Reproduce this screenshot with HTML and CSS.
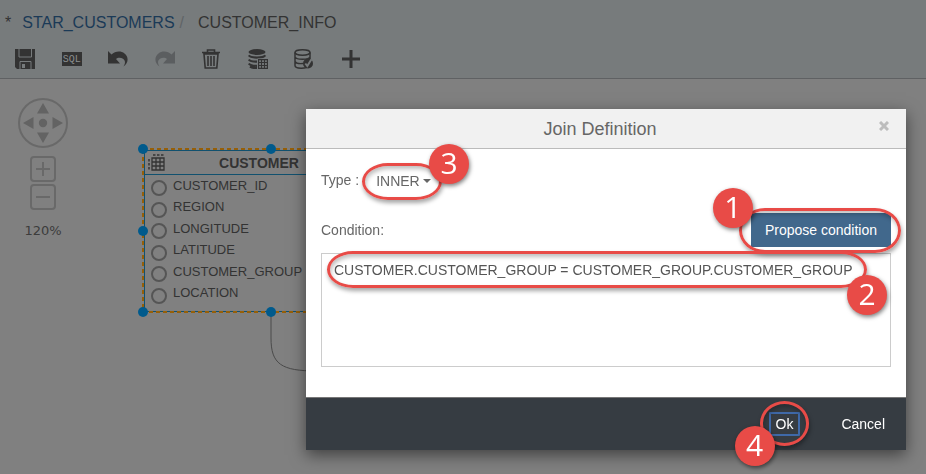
FILE: index.html
```html
<!DOCTYPE html>
<html lang="en">
<head>
<meta charset="utf-8">
<title>Join Definition</title>
<link rel="stylesheet" href="styles.css">
</head>
<body>
<header class="topbar">
  <nav class="crumbs" aria-label="Breadcrumb">
    <span class="dirty">*</span>
    <a href="#">STAR_CUSTOMERS</a>
    <span class="sep">/</span>
    <span>CUSTOMER_INFO</span>
  </nav>
  <div class="toolbar">
    <button type="button" aria-label="Save"><svg viewBox="0 0 20 20"><path fill="currentColor" d="M0 0h20v20H2l-2-2z"/><path class="cutline" d="M4 0v8h12.500V0M5 20v-7.500h11V20"/><path class="cut" d="M7 15h3v4H7z"/></svg></button>
    <button type="button" aria-label="Show SQL"><span class="sql">SQL</span></button>
    <button type="button" aria-label="Undo"><svg viewBox="0 0 20 20"><path fill="currentColor" d="M0 2l3.500 3.500C7 2 13 1.500 16.500 4.500c4.500 3.500 4 9.500-1 13 2.500-4 1.500-6.500-.5-7.800-2.500-1.700-5.500-1.200-7 .3l4 4.500H0z"/></svg></button>
    <button type="button" aria-label="Redo" class="off"><svg viewBox="0 0 20 20"><path fill="currentColor" d="M20 2l-3.500 3.500C13 2 7 1.500 3.500 4.500c-4.500 3.500-4 9.500 1 13-2.500-4-1.500-6.500.5-7.800 2.500-1.700 5.500-1.200 7 .3l-4 4.500H20z"/></svg></button>
    <button type="button" aria-label="Delete"><svg viewBox="0 0 20 20"><path fill="none" stroke="currentColor" stroke-width="1.600" d="M1 3.500h18M6.500 3V1h7v2M3 5l1.200 14h11.600L17 5zM7 7v10M10 7v10M13 7v10"/></svg></button>
    <button type="button" aria-label="Table data"><svg viewBox="0 0 20 20"><ellipse cx="9" cy="3" rx="8.500" ry="3" fill="currentColor"/><path fill="none" stroke="currentColor" stroke-width="2.200" d="M.8 6.300c1.500 3 14.900 3 16.400 0M.8 10.500c1 1.500 4 2.200 8.200 2.200M.8 14.500c1 1.500 4 2.400 8.200 2.400M2 17.500c2 1.300 4 1.700 7 1.700"/><path class="cut" d="M9.500 9.500H20V20H9.500z"/><path fill="none" stroke="currentColor" stroke-width="1.200" d="M10.600 10.600h8.800v8.800h-8.800zM13.500 10.600v8.800M16.500 10.600v8.800M10.600 13.500h8.800M10.600 16.500h8.800"/></svg></button>
    <button type="button" aria-label="Validate"><svg viewBox="0 0 20 20"><g fill="none" stroke="currentColor" stroke-width="1.500"><ellipse cx="8.500" cy="3.500" rx="7.500" ry="2.700"/><path d="M1 3.500v13c0 3.500 11 3.500 15 .5V3.500M1 8c1.500 3 13.500 3 15 0M1 12.300c1 2 5 2.500 8 2.200"/></g><circle cx="14" cy="14.500" r="5" fill="currentColor"/><path class="tick" d="M11.300 14.500l2 2.500 4-6.500"/></svg></button>
    <button type="button" aria-label="Add"><svg viewBox="0 0 20 20"><path stroke="currentColor" stroke-width="3" d="M10 1v18M1 10h18"/></svg></button>
  </div>
</header>

<main class="canvas">
  <div class="view-controls">
    <button type="button" aria-label="Pan"><svg class="pan" viewBox="0 0 50 50"><circle cx="25" cy="25" r="24" fill="none" stroke="currentColor" stroke-width="2"/><circle class="arrow" cx="25" cy="25" r="4.200"/><path class="arrow" d="M25 5l6 10.500H19zM25 45l6-10.500H19zM5 25l10.500-6v12zM45 25l-10.500-6v12z"/></svg></button>
    <button type="button" aria-label="Zoom in"><svg class="zoom" viewBox="0 0 26 26"><rect x="1" y="1" width="24" height="24" rx="3"/><path d="M6 13h14M13 6v14"/></svg></button>
    <button type="button" aria-label="Zoom out"><svg class="zoom" viewBox="0 0 26 26"><rect x="1" y="1" width="24" height="24" rx="3"/><path d="M6 13h14"/></svg></button>
    <span class="level">120%</span>
  </div>

  <section class="node">
    <h2><svg viewBox="0 0 18 18"><path fill="none" stroke="currentColor" stroke-width="1.300" d="M4 4h12v12H4zM8 4v12M12 4v12M4 8h12M4 12h12"/><path fill="none" stroke="currentColor" stroke-width="1.500" stroke-dasharray="2.500 1.500" d="M5 1h11M1 5v11"/></svg><span>CUSTOMER</span></h2>
    <ul>
      <li><i></i>CUSTOMER_ID</li>
      <li><i></i>REGION</li>
      <li><i></i>LONGITUDE</li>
      <li><i></i>LATITUDE</li>
      <li><i></i>CUSTOMER_GROUP</li>
      <li><i></i>LOCATION</li>
    </ul>
    <svg class="selection" viewBox="0 0 270 240">
      <path class="link" d="M134 170v25c0 26 10 33 46 33"/>
      <rect class="dash" x="6" y="6" width="256" height="163"/>
      <g class="grip"><circle cx="6" cy="6" r="5"/><circle cx="134" cy="6" r="5"/><circle cx="262" cy="6" r="5"/><circle cx="6" cy="88" r="5"/><circle cx="262" cy="88" r="5"/><circle cx="6" cy="169" r="5"/><circle cx="134" cy="169" r="5"/><circle cx="262" cy="169" r="5"/></g>
    </svg>
  </section>
</main>

<div class="overlay">
  <form class="dialog" role="dialog" aria-labelledby="title">
    <div class="dialog-head">
      <h1 id="title">Join Definition</h1>
      <button type="button" class="close" aria-label="Close"><svg viewBox="0 0 10 10"><path d="M1 1l8 8M9 1L1 9"/></svg></button>
    </div>
    <div class="dialog-body">
      <div class="type-row">
        <label for="type">Type :</label>
        <div class="type-pick">
          <select id="type"><option>INNER</option></select>
          <span class="ring ring-type"></span><span class="badge badge-type">3</span>
        </div>
      </div>
      <div class="cond-row">
        <label for="cond">Condition:</label>
        <div class="mark">
          <button type="button" class="propose">Propose condition</button>
          <span class="ring ring-propose"></span><span class="badge badge-propose">1</span>
        </div>
      </div>
      <div class="mark">
        <textarea id="cond" spellcheck="false">CUSTOMER.CUSTOMER_GROUP = CUSTOMER_GROUP.CUSTOMER_GROUP</textarea>
        <span class="ring ring-cond"></span><span class="badge badge-cond">2</span>
      </div>
    </div>
    <div class="dialog-foot">
      <div class="mark">
        <button type="button" class="ok">Ok</button>
        <span class="ring ring-ok"></span><span class="badge badge-ok">4</span>
      </div>
      <button type="button" class="cancel">Cancel</button>
    </div>
  </form>
</div>
</body>
</html>
```
FILE: styles.css
```css
* { box-sizing: border-box; }

body {
  margin: 0;
  min-height: 100vh;
  display: flex;
  flex-direction: column;
  overflow: hidden;
  background: #808080;
  color: #333;
  font: 14px/20px "Liberation Sans", Arial, sans-serif;
}

button, select, textarea { font: inherit; color: inherit; }

button {
  padding: 0;
  border: 0;
  background: none;
}

svg { display: block; }

/* Top bar */
.topbar {
  background: #777b7c;
  border-bottom: 1px solid #5f6163;
  padding: 13px 2px 8px;
}

.crumbs {
  display: flex;
  padding-left: 3px;
  font-size: 16px;
}

.crumbs a {
  margin-left: 11px;
  color: #1b3a57;
  text-decoration: none;
}

.sep {
  margin: 0 14px 0 5px;
  color: #606467;
}

.toolbar {
  display: grid;
  grid-template-columns: repeat(8, 1fr);
  width: 372px;
  margin-top: 15px;
}

.toolbar button {
  display: grid;
  place-items: center;
  height: 22px;
}

.toolbar svg { width: 20px; height: 20px; }
.toolbar .off { color: #5b5e60; }
.cut { fill: #777b7c; }
.cutline { fill: none; stroke: #777b7c; }
.tick { fill: none; stroke: #777b7c; stroke-width: 2; }

.sql {
  width: 20px;
  height: 14px;
  background: #333;
  color: #8b8f90;
  font: 10px/16px "Liberation Mono", monospace;
  text-align: center;
}

/* Canvas */
.canvas {
  position: relative;
  flex: 1;
}

.view-controls {
  display: flex;
  flex-direction: column;
  align-items: center;
  gap: 2px;
  width: 50px;
  margin: 19px 18px;
  color: #696969;
}

.pan { width: 50px; height: 50px; margin-bottom: 6px; }
.arrow { fill: #636363; }

.zoom {
  width: 26px;
  height: 26px;
  fill: none;
  stroke: currentColor;
  stroke-width: 2;
}

.level {
  margin-top: 9px;
  color: #3c3c3c;
  font: 13px/20px "DejaVu Sans", sans-serif;
}

.node {
  position: absolute;
  left: 144px;
  top: 71px;
  width: 255px;
  height: 162px;
  display: flex;
  flex-direction: column;
  border: 1px solid #11516f;
}

.node h2 {
  display: flex;
  flex-shrink: 0;
  align-items: center;
  height: 24px;
  margin: 0;
  padding: 0 46px 0 3px;
  border-bottom: 1px solid #11516f;
  font-size: 14px;
}

.node h2 svg { width: 18px; height: 18px; }
.node h2 span { flex: 1; text-align: center; }

.node ul {
  flex: 1;
  display: flex;
  flex-direction: column;
  margin: 0;
  padding: 0 0 7px 6px;
  list-style: none;
  font-size: 13px;
}

.node li {
  flex: 1;
  display: flex;
  align-items: center;
  gap: 6px;
  line-height: 16px;
}

.node i {
  width: 16px;
  height: 16px;
  margin-top: 5px;
  border: 2px solid #555;
  border-radius: 50%;
}

.selection {
  position: absolute;
  left: -8px;
  top: -8px;
  width: 270px;
  height: 240px;
}

.link { fill: none; stroke: #4a4a4a; }
.dash { fill: none; stroke: #965f08; stroke-width: 2; stroke-dasharray: 4 3; }
.grip { fill: #005a8c; }

/* Dialog */
.overlay {
  position: fixed;
  inset: 0;
  display: flex;
  justify-content: flex-end;
  align-items: flex-start;
  padding: 109px 20px 0;
}

.dialog {
  width: 100%;
  max-width: 600px;
  background: #fff;
  color: #666;
  box-shadow: 0 5px 15px rgba(0, 0, 0, .5);
}

.dialog-head {
  position: relative;
  padding: 10px 28px 9px 16px;
  background: #f1f1f1;
  border-bottom: 1px solid #bbb;
}

.dialog-head h1 {
  margin: 0;
  font-size: 18px;
  font-weight: normal;
  line-height: 20px;
  text-align: center;
}

.close {
  position: absolute;
  top: 12px;
  right: 17px;
}

.close svg {
  width: 10px;
  height: 10px;
  stroke: #bdbdbd;
  stroke-width: 3;
}

.dialog-body { padding: 14px 15px 30px; }

.type-row, .cond-row {
  display: flex;
  align-items: center;
  height: 34px;
}

.type-row { gap: 17px; margin-bottom: 16px; }
.cond-row { justify-content: space-between; margin-bottom: 6px; }
.mark, .type-pick { position: relative; }

.type-pick { padding-top: 2px; }

.type-pick::after {
  content: "";
  position: absolute;
  right: 1px;
  top: 10px;
  border: 4px solid transparent;
  border-top-color: #666;
  border-bottom: 0;
}

select {
  display: block;
  appearance: none;
  width: 56px;
  padding: 0;
  border: 0;
  background: none;
}

.propose {
  display: block;
  height: 34px;
  padding: 0 14px;
  background: #41688c;
  color: #fff;
}

textarea {
  display: block;
  width: 100%;
  height: 114px;
  padding: 6px 12px;
  border: 1px solid #ccc;
  background: #fff;
  color: #555;
  resize: none;
  outline: 0;
}

.dialog-foot {
  display: flex;
  justify-content: flex-end;
  align-items: center;
  gap: 41px;
  padding: 14px 21px;
  background: #363c42;
  border-top: 1px solid #777;
  color: #fff;
}

.ok {
  display: block;
  padding: 0 5px;
  border: 2px solid #3f69a8;
  border-radius: 1px;
}

/* Numbered callouts */
.ring {
  position: absolute;
  z-index: 1;
  border: 3px solid #e84b47;
  border-radius: 26px / 50%;
  box-shadow: 1px 3px 4px rgba(0, 0, 0, .35), inset 1px 3px 4px rgba(0, 0, 0, .25);
  pointer-events: none;
}

.badge {
  position: absolute;
  z-index: 2;
  width: 40px;
  height: 40px;
  border-radius: 50%;
  background: #e84b47;
  box-shadow: 1px 2px 4px rgba(0, 0, 0, .5);
  color: #fff;
  font: 500 30px/38px "Open Sans", sans-serif;
  text-align: center;
  pointer-events: none;
}

.ring-type { inset: -6px -10px -9px -14px; }
.badge-type { right: -37px; top: -25px; }
.ring-propose { inset: -5px -10px -6px -12px; }
.badge-propose { left: -38px; top: -25px; }
.ring-cond { left: 6px; right: 24px; top: -2px; height: 37px; }
.badge-cond { right: 4px; top: 22px; }
.ring-ok { inset: -11px -9px -10px; border-radius: 50%; }
.badge-ok { left: -34px; top: 14px; }
```
